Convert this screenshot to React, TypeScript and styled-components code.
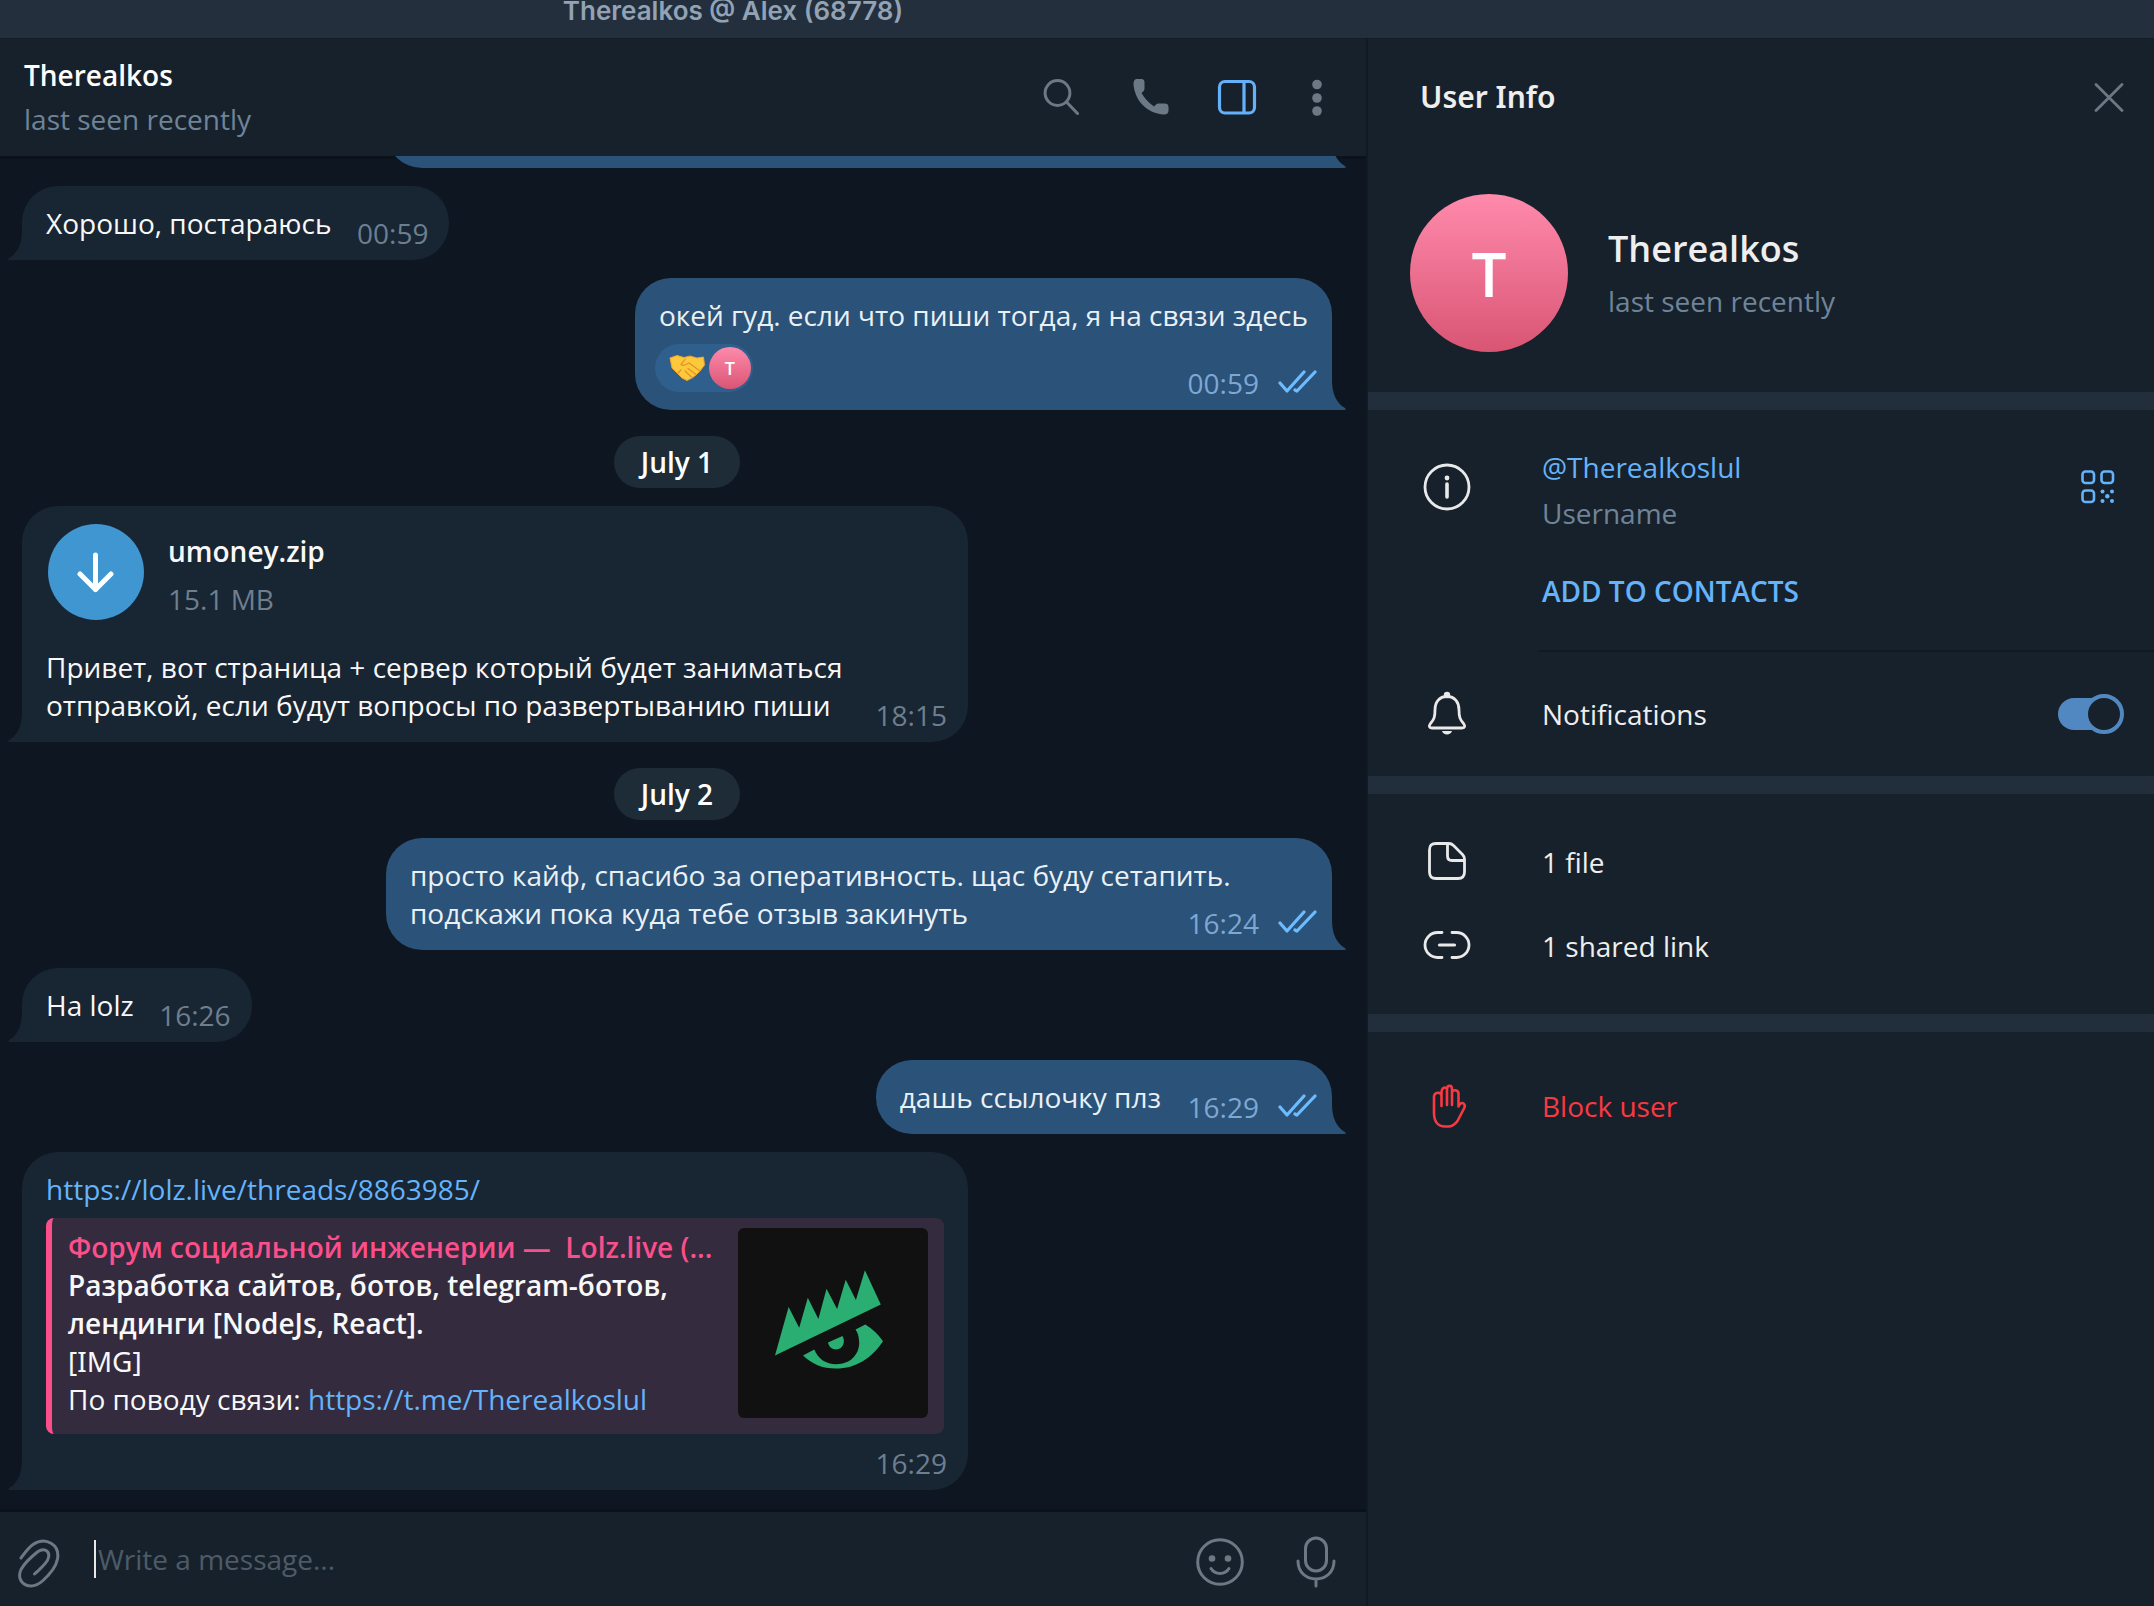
import React from "react";
import styled, { createGlobalStyle, css } from "styled-components";

const color = {
  title: "#242f3d",
  panel: "#17212b",
  chat: "#0e1621",
  incoming: "#182533",
  outgoing: "#2b5278",
  text: "#f8f8f8",
  muted: "#6d7f8f",
  status: "#708499",
  icon: "#6c7883",
  accent: "#64b3fb",
  danger: "#fa3842",
};

const GlobalStyle = createGlobalStyle`
  *, *::before, *::after { box-sizing: border-box; }
  body {
    margin: 0;
    background: ${color.chat};
    color: ${color.text};
    font-family: "Open Sans", "Noto Sans", sans-serif;
    font-size: 28px;
    line-height: 38px;
  }
  button, input { font: inherit; color: inherit; }
  button { border: 0; background: none; padding: 0; cursor: pointer; }
  a { color: ${color.accent}; text-decoration: none; }
  svg { display: block; flex: none; }
  h1, h2, p { margin: 0; font: inherit; }
`;

const Window = styled.div`
  display: flex;
  flex-direction: column;
  height: 100vh;
`;

const TitleBar = styled.header`
  flex: none;
  height: 39px;
  padding-right: 688px;
  background: ${color.title};
  border-bottom: 1px solid #131c26;
  color: #91a3b5;
  font-family: Inter, "Liberation Sans", sans-serif;
  font-size: 26px;
  font-weight: 600;
  line-height: 22px;
  text-align: center;
`;

const Columns = styled.div`
  flex: 1;
  display: flex;
  min-height: 0;
`;

const Chat = styled.main`
  flex: 1;
  min-width: 0;
  display: flex;
  flex-direction: column;
  border-right: 2px solid #111a24;
`;

const ChatHeader = styled.div`
  flex: none;
  display: flex;
  align-items: center;
  height: 117px;
  padding: 0 10px 2px 24px;
  background: ${color.panel};
`;

const Peer = styled.div`
  flex: 1;
  line-height: 44px;
`;

const PeerName = styled.h1`
  font-weight: 600;
  color: #ffffff;
`;

const Status = styled.p`
  color: ${color.status};
`;

const IconButton = styled.button<{ $width: number; $tint?: string }>`
  display: flex;
  align-items: center;
  justify-content: center;
  flex: none;
  width: ${(p) => p.$width}px;
  height: 64px;
  color: ${(p) => p.$tint ?? color.icon};
`;

const ComposerButton = styled(IconButton)`
  padding-top: 6px;
`;

const Messages = styled.section`
  flex: 1;
  min-height: 0;
  overflow: hidden;
  display: flex;
  flex-direction: column;
  justify-content: flex-end;
  gap: 18px;
  padding: 0 34px 22px 22px;
  box-shadow: inset 0 3px 0 #0b121b, inset 0 -3px 0 #0b121b;
`;

const DatePill = styled.div`
  flex: none;
  align-self: center;
  margin-top: 8px;
  padding: 7px 27px;
  border-radius: 26px;
  background: #1e2c38;
  color: #ffffff;
  font-weight: 600;
`;

const BubbleBox = styled.article<{ $out?: boolean }>`
  position: relative;
  flex: none;
  display: grid;
  max-width: 946px;
  ${(p) =>
    p.$out
      ? css`
          align-self: flex-end;
          background: ${color.outgoing};
          color: #e9f0f6;
          border-radius: 36px 36px 0 36px;
          --meta: #7da8d3;
          --meta-right: 15px;
        `
      : css`
          align-self: flex-start;
          background: ${color.incoming};
          border-radius: 36px 36px 36px 0;
          --meta: ${color.muted};
          --meta-right: 21px;
        `}
`;

const TailSvg = styled.svg<{ $out?: boolean }>`
  position: absolute;
  bottom: 0;
  ${(p) =>
    p.$out
      ? css`
          right: -14px;
          transform: scaleX(-1);
          fill: ${color.outgoing};
        `
      : css`
          left: -14px;
          fill: ${color.incoming};
        `}
`;

const Body = styled.div`
  grid-area: 1 / 1;
  padding: 18px 24px;
`;

const MetaRow = styled.div`
  grid-area: 1 / 1;
  align-self: end;
  justify-self: end;
  display: flex;
  align-items: center;
  gap: 18px;
  padding: 0 var(--meta-right) 8px 0;
  color: var(--meta);
`;

/* Keeps the end of the last text line clear of the time stamp. */
const MetaSpace = styled.span<{ $out?: boolean }>`
  display: inline-block;
  width: ${(p) => (p.$out ? 147 : 94)}px;
`;

const EarlierMessage = styled.div`
  width: 946px;
  height: 112px;
`;

const Reaction = styled.button`
  display: flex;
  align-items: center;
  gap: 4px;
  width: 98px;
  height: 48px;
  margin: 10px 0 0 -4px;
  padding: 0 2px 0 14px;
  border-radius: 24px;
  background: #2f5f8c;
`;

const Avatar = styled.span<{ $size: number; $font: number }>`
  flex: none;
  width: ${(p) => p.$size}px;
  height: ${(p) => p.$size}px;
  border-radius: 50%;
  background: linear-gradient(#ff8aac, #d95574);
  color: #ffffff;
  font-family: "Open Sans", sans-serif;
  font-size: ${(p) => p.$font}px;
  font-weight: 600;
  line-height: ${(p) => p.$size}px;
  text-align: center;
`;

const FileRow = styled.div`
  display: flex;
  align-items: flex-start;
  gap: 24px;
  height: 96px;
  margin: 0 0 28px 2px;
`;

const DownloadButton = styled.button`
  display: grid;
  place-items: center;
  width: 96px;
  height: 96px;
  border-radius: 50%;
  background: #3f96d0;
  color: #ffffff;
`;

const FileName = styled.p`
  padding-top: 4px;
  font-weight: 600;
  line-height: 46px;
`;

const FileSize = styled.p`
  color: ${color.muted};
  line-height: 50px;
`;

const LinkBody = styled(Body)`
  width: 946px;
  padding-bottom: 56px;
`;

const Preview = styled.div`
  display: flex;
  justify-content: space-between;
  gap: 24px;
  margin: 10px 0 0;
  padding: 10px 16px 16px;
  border-left: 6px solid #fb4f8b;
  border-radius: 8px;
  background: #342b3e;
`;

const PreviewText = styled.div`
  flex: 1;
  min-width: 0;
`;

const PreviewTitle = styled.p`
  color: #fb4f8b;
  font-weight: 600;
  white-space: nowrap;
`;

const Strong = styled.p`
  font-weight: 600;
`;

const Tag = styled.p`
  font-family: "Noto Sans", sans-serif;
`;

const Thumb = styled.div`
  flex: none;
  width: 190px;
  height: 190px;
  border-radius: 6px;
  background: #111111;
  overflow: hidden;
`;

const Composer = styled.form`
  flex: none;
  display: flex;
  align-items: center;
  height: 94px;
  padding: 0 10px 0 16px;
  background: ${color.panel};
`;

const Caret = styled.span`
  width: 2px;
  height: 38px;
  margin-left: 32px;
  background: #e8e8e8;
`;

const MessageInput = styled.input`
  flex: 1;
  min-width: 0;
  height: 64px;
  padding: 0 2px;
  border: 0;
  outline: 0;
  background: none;
  &::placeholder {
    color: #4d5b68;
    opacity: 1;
  }
`;

const Info = styled.aside`
  flex: none;
  width: 786px;
  background: ${color.panel};
  color: #eeeeee;
`;

const InfoHeader = styled.div`
  display: flex;
  align-items: center;
  justify-content: space-between;
  height: 117px;
  padding: 0 13px 2px 52px;
`;

const InfoTitle = styled.h2`
  font-family: "Noto Sans", sans-serif;
  font-size: 30px;
  font-weight: 600;
`;

const Profile = styled.div`
  display: flex;
  align-items: center;
  gap: 40px;
  padding: 38px 42px 40px;
`;

const ProfileText = styled.div`
  padding-bottom: 10px;
`;

const ProfileName = styled.p`
  font-size: 36px;
  font-weight: 600;
  line-height: 66px;
`;

const Divider = styled.div`
  height: 18px;
  background: #232e3c;
`;

const Row = styled.div<{ $height: number }>`
  display: grid;
  grid-template-columns: 158px 1fr auto;
  align-items: center;
  height: ${(p) => p.$height}px;
  width: 100%;
  padding-right: 30px;
  text-align: left;
`;

const ActionRow = styled(Row).attrs({ as: "button", type: "button" })<{ $danger?: boolean }>`
  color: ${(p) => (p.$danger ? color.danger : "inherit")};
`;

const RowIcon = styled.span`
  display: grid;
  justify-content: center;
  color: ${(p) => p.color ?? "#e9e9ea"};
`;

const Group = styled.div<{ $pad: string }>`
  padding: ${(p) => p.$pad};
`;

const Detail = styled.div`
  padding: 6px 0 0 16px;
  line-height: 46px;
`;

const RowLabel = styled.span`
  padding-left: 16px;
`;

const AddButton = styled.button`
  display: block;
  height: 64px;
  margin: 31px 0 27px 174px;
  color: ${color.accent};
  font-weight: 600;
`;

const Rule = styled.div`
  height: 2px;
  margin-left: 171px;
  background: #111a23;
`;

const Switch = styled.input`
  appearance: none;
  position: relative;
  width: 60px;
  height: 32px;
  margin: 0 6px 0 0;
  border-radius: 16px;
  background: #5288c1;
  cursor: pointer;
  &::after {
    content: "";
    position: absolute;
    top: -4px;
    right: -6px;
    width: 40px;
    height: 40px;
    border: 4px solid #5288c1;
    border-radius: 50%;
    background: ${color.panel};
  }
`;

const Tail = ({ out }: { out?: boolean }) => (
  <TailSvg $out={out} width="15" height="30" viewBox="0 0 15 30" aria-hidden>
    <path d="M15 0H14C14 13 10 23 1 28Q-1 30 2 30H15Z" />
  </TailSvg>
);

const Ticks = () => (
  <svg width="40" height="26" viewBox="0 0 40 26" fill="none" stroke="#6cbcff" strokeWidth="3.200" strokeLinecap="round" strokeLinejoin="round" aria-hidden>
    <path d="M3 13L10 21L27 2M18 20L20 21L38 2" />
  </svg>
);

const Handshake = () => (
  <svg width="36" height="28" viewBox="0 0 36 28" aria-hidden>
    <path d="M1 4L8 1.500L15 3.500L21 2L28 4L34.500 3L35.500 11L31 17L27 21L23 24L18 26.500L13 24L8 19L3 14Z" fill="#fdc93b" stroke="#eca335" strokeWidth="1" strokeLinejoin="round" />
    <path d="M16 5.500L12 10.500C14 12.500 17 11 20 9L31 17M19 14.500L27 20.500M16 17L23 23.500M9 19L12 16" fill="none" stroke="#e0912a" strokeWidth="1.200" strokeLinecap="round" />
  </svg>
);

const SearchIcon = () => (
  <svg width="36" height="36" viewBox="0 0 36 36" fill="none" stroke="currentColor" strokeWidth="3" strokeLinecap="round" aria-hidden>
    <circle cx="14.500" cy="14" r="12.400" />
    <path d="M23.500 23L34.500 34.500" />
  </svg>
);

const PhoneIcon = () => (
  <svg width="36" height="36" viewBox="0 0 36 36" fill="currentColor" aria-hidden>
    <path d="M4.500 0H8.500C10.500 0 11.500 1.500 11.500 3.500V9.500C11.500 12 10 12.500 8.500 14C11.500 19.500 15.500 23.500 21 27.500C22.500 26 23.500 24.500 25.500 24.500H31.500C34 24.500 35.500 25.500 35.500 28V31.500C35.500 34.500 33.500 35.500 31 35.500C14 34.500 1.500 21.500 .5 5C.5 2 1.500 0 4.500 0Z" />
  </svg>
);

const PanelIcon = () => (
  <svg width="40" height="36" viewBox="0 0 40 36" fill="none" stroke="currentColor" strokeWidth="3.200" aria-hidden>
    <rect x="2.500" y="2.500" width="35" height="31.500" rx="5.500" />
    <path d="M27 3V33" />
  </svg>
);

const DotsIcon = () => (
  <svg width="10" height="38" viewBox="0 0 10 38" fill="currentColor" aria-hidden>
    <circle cx="5" cy="6.500" r="4.800" />
    <circle cx="5" cy="20" r="4.800" />
    <circle cx="5" cy="33" r="4.800" />
  </svg>
);

const CloseIcon = () => (
  <svg width="30" height="30" viewBox="0 0 30 30" fill="none" stroke="currentColor" strokeWidth="2.800" strokeLinecap="round" aria-hidden>
    <path d="M2 2.500L28 28.500M28 2.500L2 28.500" />
  </svg>
);

const DownIcon = () => (
  <svg width="40" height="42" viewBox="0 0 40 42" fill="none" stroke="currentColor" strokeWidth="5" strokeLinecap="round" strokeLinejoin="round" aria-hidden>
    <path d="M19.500 4V38.500M4 23L19.500 38.500L35 23" />
  </svg>
);

const ClipIcon = () => (
  <svg width="46" height="52" viewBox="0 0 46 52" fill="none" stroke="currentColor" strokeWidth="3" strokeLinecap="round" aria-hidden>
    <path d="M5 22C8 18 12 12 17 8.500C30 0 44 9 41.500 23C40 31 33 39 27 44.500C22 49 16 51.500 10 49C3 46 2.500 39 5 33.500C8 28 15 21 22 15.500C28 11.500 34 15 32.500 21.500C31.500 27 25 32 18.500 38" />
  </svg>
);

const SmileIcon = () => (
  <svg width="48" height="48" viewBox="0 0 48 48" fill="none" stroke="currentColor" strokeWidth="3" strokeLinecap="round" aria-hidden>
    <circle cx="24" cy="24" r="22.300" />
    <path d="M15 30.500C19 37 29 37 33 30.500" />
    <circle cx="16" cy="20.500" r="3.300" fill="currentColor" stroke="none" />
    <circle cx="32" cy="20.500" r="3.300" fill="currentColor" stroke="none" />
  </svg>
);

const MicIcon = () => (
  <svg width="40" height="52" viewBox="0 0 40 52" fill="none" stroke="currentColor" strokeWidth="3" strokeLinecap="round" aria-hidden>
    <rect x="9.500" y="2" width="21" height="33" rx="10.500" />
    <path d="M2 25C2 49 38 49 38 25M20 43V50" />
  </svg>
);

const InfoIcon = () => (
  <svg width="48" height="48" viewBox="0 0 48 48" fill="none" stroke="currentColor" strokeWidth="2.800" strokeLinecap="round" aria-hidden>
    <circle cx="24" cy="24" r="22" />
    <path d="M24 21V34" strokeWidth="3.600" />
    <circle cx="24" cy="15" r="2.400" fill="currentColor" stroke="none" />
  </svg>
);

const QrIcon = () => (
  <svg width="34" height="34" viewBox="0 0 34 34" fill="none" stroke="currentColor" strokeWidth="2.600" aria-hidden>
    <rect x="1.500" y="1.500" width="11.500" height="11.500" rx="3" />
    <rect x="20.500" y="1.500" width="11.500" height="11.500" rx="3" />
    <rect x="1.500" y="20.500" width="11.500" height="11.500" rx="3" />
    <g fill="currentColor" stroke="none">
      <circle cx="21.500" cy="21.500" r="2" />
      <circle cx="31" cy="21.500" r="2" />
      <circle cx="26.300" cy="26.300" r="2.200" />
      <circle cx="21.500" cy="31" r="2" />
      <circle cx="31" cy="31" r="2" />
    </g>
  </svg>
);

const BellIcon = () => (
  <svg width="40" height="46" viewBox="0 0 40 46" fill="none" stroke="currentColor" strokeWidth="2.800" strokeLinejoin="round" aria-hidden>
    <path d="M20 5.500C12 5.500 8 11.500 8 19C8 26 7 28.500 3.500 32.500C1.500 35 2 37 5 37H35C38 37 38.500 35 36.500 32.500C33 28.500 32 26 32 19C32 11.500 28 5.500 20 5.500Z" />
    <circle cx="20" cy="4" r="3.200" fill="currentColor" stroke="none" />
    <path d="M15 40H25C24 44.500 16 44.500 15 40Z" fill="currentColor" stroke="none" />
  </svg>
);

const FileIcon = () => (
  <svg width="40" height="40" viewBox="0 0 40 40" fill="none" stroke="currentColor" strokeWidth="2.800" strokeLinejoin="round" aria-hidden>
    <path d="M9 1.500H22C24 1.500 25 2 26.500 3.500L35.500 12.500C37 14 37.500 15 37.500 17V30C37.500 34.500 35.500 36.500 31 36.500H9C4.500 36.500 2.500 34.500 2.500 30V8C2.500 3.500 4.500 1.500 9 1.500Z" />
    <path d="M20.500 2V14C20.500 17 22 18.500 25 18.500H37" />
  </svg>
);

const LinkIcon = () => (
  <svg width="48" height="30" viewBox="0 0 48 30" fill="none" stroke="currentColor" strokeWidth="2.800" strokeLinecap="round" aria-hidden>
    <path d="M19 1.500H14.500A12.500 12.500 0 0 0 14.500 26.500H19M29 1.500H33.500A12.500 12.500 0 0 1 33.500 26.500H29" />
    <path d="M16.500 14H31.500" strokeWidth="3.200" />
  </svg>
);

const HandIcon = () => (
  <svg width="38" height="46" viewBox="-1 0 38 46" fill="none" stroke="currentColor" strokeWidth="2.600" strokeLinecap="round" strokeLinejoin="round" aria-hidden>
    <path d="M12.500 23V9.500M12.500 13C12.500 8 5 9 5 14V30C5 38.500 9 43.500 16 43.500H19C23 43.500 26 41.500 28.500 38L35 25.500C36.500 22.500 35.500 20.500 33.500 20C31.500 19.500 30.500 21.500 29.500 23.500V11C29.500 6.500 23.500 6 23 9.500V22M12.500 10C12.500 3.500 17.500 3.500 18 6.500V22M18 6C18.500 1.500 23 2 23 6V10" />
  </svg>
);

const EyeLogo = () => (
  <svg width="190" height="190" viewBox="0 0 190 190" fill="#2aae72" role="img" aria-label="Lolz.live">
    <path d="M37 127.500L50.600 79L61.200 99.700L69.800 69.800L80.400 91L88.500 60.700L99.100 81L107.700 51.700L117.900 72L126.900 42.300L142.800 76.600Z" />
    <path d="M65 127.500L76.300 121.500C80 131 88 136.200 98.300 136.200C112 136.200 121.200 127 121.200 114.500C121 109 120 105 117.500 101.500L127.300 96.500Q138 103 145 113.200C134 130 118 140.500 98 140.500C84 140.500 74 136 65 127.500Z" />
    <path d="M90 114.500L104.500 108C108 114 104.500 121.400 98.300 121.400C94 121.400 91 119 90 114.500Z" />
  </svg>
);

const Meta = ({ time, read }: { time: string; read?: boolean }) => (
  <MetaRow>
    <time>{time}</time>
    {read && <Ticks />}
  </MetaRow>
);

type BubbleProps = { out?: boolean; time: string; children: React.ReactNode };

const Bubble = ({ out, time, children }: BubbleProps) => (
  <BubbleBox $out={out}>
    <Tail out={out} />
    <Body>{children}</Body>
    <Meta time={time} read={out} />
  </BubbleBox>
);

const TextBubble = ({ out, time, children }: BubbleProps) => (
  <Bubble out={out} time={time}>
    {children}
    <MetaSpace $out={out} />
  </Bubble>
);

export default function App() {
  return (
    <Window>
      <GlobalStyle />
      <TitleBar>Therealkos @ Alex (68778)</TitleBar>
      <Columns>
        <Chat>
          <ChatHeader>
            <Peer>
              <PeerName>Therealkos</PeerName>
              <Status>last seen recently</Status>
            </Peer>
            <IconButton type="button" $width={90} aria-label="Search"><SearchIcon /></IconButton>
            <IconButton type="button" $width={90} aria-label="Call"><PhoneIcon /></IconButton>
            <IconButton type="button" $width={82} $tint="#64b1fa" aria-label="Toggle user info"><PanelIcon /></IconButton>
            <IconButton type="button" $width={78} aria-label="More"><DotsIcon /></IconButton>
          </ChatHeader>

          <Messages>
            <BubbleBox $out>
              <Tail out />
              <EarlierMessage />
            </BubbleBox>
            <TextBubble time="00:59">Хорошо, постараюсь</TextBubble>
            <Bubble out time="00:59">
              окей гуд. если что пиши тогда, я на связи здесь
              <Reaction type="button" aria-label="Handshake reaction">
                <Handshake />
                <Avatar $size={42} $font={18}>T</Avatar>
              </Reaction>
            </Bubble>
            <DatePill>July 1</DatePill>
            <Bubble time="18:15">
              <FileRow>
                <DownloadButton type="button" aria-label="Download"><DownIcon /></DownloadButton>
                <div>
                  <FileName>umoney.zip</FileName>
                  <FileSize>15.1 MB</FileSize>
                </div>
              </FileRow>
              Привет, вот страница + сервер который будет заниматься отправкой, если будут вопросы по развертыванию пиши
              <MetaSpace />
            </Bubble>
            <DatePill>July 2</DatePill>
            <TextBubble out time="16:24">
              просто кайф, спасибо за оперативность. щас буду сетапить. подскажи пока куда тебе отзыв закинуть
            </TextBubble>
            <TextBubble time="16:26">На lolz</TextBubble>
            <TextBubble out time="16:29">дашь ссылочку плз</TextBubble>
            <BubbleBox>
              <Tail />
              <LinkBody>
                <a href="https://lolz.live/threads/8863985/">https://lolz.live/threads/8863985/</a>
                <Preview>
                  <PreviewText>
                    <PreviewTitle>Форум социальной инженерии —{"\u00a0"} Lolz.live (...</PreviewTitle>
                    <Strong>Разработка сайтов, ботов, telegram-ботов, лендинги [NodeJs, React].</Strong>
                    <Tag>[IMG]</Tag>
                    <p>
                      По поводу связи: <a href="https://t.me/Therealkoslul">https://t.me/Therealkoslul</a>
                    </p>
                  </PreviewText>
                  <Thumb><EyeLogo /></Thumb>
                </Preview>
              </LinkBody>
              <Meta time="16:29" />
            </BubbleBox>
          </Messages>

          <Composer>
            <ComposerButton type="button" $width={46} aria-label="Attach file"><ClipIcon /></ComposerButton>
            <Caret />
            <MessageInput aria-label="Message" placeholder="Write a message..." />
            <ComposerButton type="button" $width={112} aria-label="Emoji"><SmileIcon /></ComposerButton>
            <ComposerButton type="button" $width={80} aria-label="Record voice message"><MicIcon /></ComposerButton>
          </Composer>
        </Chat>

        <Info>
          <InfoHeader>
            <InfoTitle>User Info</InfoTitle>
            <IconButton type="button" $width={64} aria-label="Close"><CloseIcon /></IconButton>
          </InfoHeader>
          <Profile>
            <Avatar $size={158} $font={62}>T</Avatar>
            <ProfileText>
              <ProfileName>Therealkos</ProfileName>
              <Status>last seen recently</Status>
            </ProfileText>
          </Profile>
          <Divider />
          <Group $pad="28px 0 0">
            <Row $height={90}>
              <RowIcon><InfoIcon /></RowIcon>
              <Detail>
                <a href="https://t.me/Therealkoslul">@Therealkoslul</a>
                <Status>Username</Status>
              </Detail>
              <IconButton type="button" $width={52} $tint={color.accent} aria-label="QR code"><QrIcon /></IconButton>
            </Row>
            <AddButton type="button">ADD TO CONTACTS</AddButton>
          </Group>
          <Rule />
          <Row as="label" $height={124}>
            <RowIcon><BellIcon /></RowIcon>
            <RowLabel>Notifications</RowLabel>
            <Switch type="checkbox" defaultChecked />
          </Row>
          <Divider />
          <Group $pad="26px 0">
            <ActionRow $height={84}>
              <RowIcon><FileIcon /></RowIcon>
              <RowLabel>1 file</RowLabel>
            </ActionRow>
            <ActionRow $height={84}>
              <RowIcon><LinkIcon /></RowIcon>
              <RowLabel>1 shared link</RowLabel>
            </ActionRow>
          </Group>
          <Divider />
          <Group $pad="32px 0">
            <ActionRow $height={84} $danger>
              <RowIcon color={color.danger}><HandIcon /></RowIcon>
              <RowLabel>Block user</RowLabel>
            </ActionRow>
          </Group>
        </Info>
      </Columns>
    </Window>
  );
}
